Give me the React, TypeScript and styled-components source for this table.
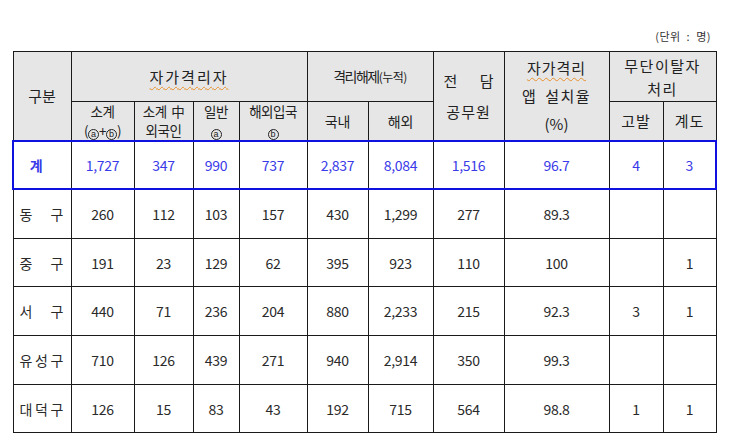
import React from "react";
import styled, { createGlobalStyle } from "styled-components";

const Global = createGlobalStyle`
  html, body { margin: 0; padding: 0; background: #fff; }
  body { font-family: "Noto Sans CJK KR", "Noto Sans", sans-serif; color: #222; }
`;

const Page = styled.div`
  width: 737px;
  height: 447px;
  padding: 28px 0 0 12px;
  box-sizing: border-box;
`;

const UnitLine = styled.div`
  width: 699px;
  height: 17px;
  line-height: 17px;
  margin-bottom: 6px;
  display: flex;
  justify-content: flex-end;
  align-items: center;
  font-size: 11px;
  color: #333;
  letter-spacing: 0.5px;
  word-spacing: 3px;
`;

const Table = styled.table`
  border-collapse: collapse;
  table-layout: fixed;
  width: 703px;
  td, th {
    border: 1px solid #1a1a1a;
    padding: 0;
    text-align: center;
    vertical-align: middle;
  }
`;

const HeadRow = styled.tr<{ $h: number }>`
  height: ${(p) => p.$h}px;
`;

const Th = styled.th<{ $size?: number; $lh?: number }>`
  background: #e6e6e6;
  font-weight: 400;
  font-size: ${(p) => p.$size ?? 15}px;
  line-height: ${(p) => p.$lh ?? 18}px;
  color: #222;
  white-space: nowrap;
  overflow: hidden;
`;

const Wavy = styled.span`
  text-decoration: underline wavy #e8902c;
  text-decoration-thickness: 1px;
  text-underline-offset: 3px;
`;

const Spread = styled.span<{ $w: number }>`
  display: inline-flex;
  justify-content: space-between;
  width: ${(p) => p.$w}px;
`;

const Small = styled.span`
  font-size: 12px;
  letter-spacing: -0.5px;
`;

const Tight = styled.span`
  letter-spacing: -1.5px;
`;

const SubHead = styled(Th)`
  font-size: 13.5px;
  line-height: 18.5px;
  letter-spacing: -0.5px;
  word-spacing: 2px;
`;

const Circled = styled.span`
  display: inline-flex;
  align-items: center;
  justify-content: center;
  width: 11px;
  height: 11px;
  border: 1px solid #222;
  border-radius: 50%;
  font-size: 9px;
  line-height: 1;
  letter-spacing: 0;
  vertical-align: -1px;
  box-sizing: border-box;
  font-family: "Liberation Sans", sans-serif;
`;

const DataRow = styled.tr<{ $h: number; $total?: boolean }>`
  height: ${(p) => p.$h}px;
  td {
    font-size: 14px;
    color: ${(p) => (p.$total ? "#3a3ae8" : "#2a2a2a")};
    letter-spacing: -0.3px;
    ${(p) =>
      p.$total
        ? `border-top: 2px solid #1010e0; border-bottom: 2px solid #1010e0;`
        : ""}
  }
  td:first-child {
    ${(p) => (p.$total ? `border-left: 2px solid #1010e0;` : "")}
  }
  td:last-child {
    ${(p) => (p.$total ? `border-right: 2px solid #1010e0;` : "")}
  }
`;

const NameCell = styled.td<{ $total?: boolean }>`
  font-size: 14px !important;
  letter-spacing: 0 !important;
  ${(p) => (p.$total ? `font-weight: 700; padding-right: 12px !important;` : "")}
`;

const NameSpread = styled.span`
  display: flex;
  justify-content: space-between;
  padding: 0 7px 0 6px;
`;

const cols = [58, 63, 59, 46, 68, 61, 65, 71, 105, 54, 53];

type Row = { name: string; spread?: boolean; total?: boolean; h: number; v: string[] };

const rows: Row[] = [
  { name: "계", total: true, h: 48, v: ["1,727", "347", "990", "737", "2,837", "8,084", "1,516", "96.7", "4", "3"] },
  { name: "동 구", spread: true, h: 50, v: ["260", "112", "103", "157", "430", "1,299", "277", "89.3", "", ""] },
  { name: "중 구", spread: true, h: 48, v: ["191", "23", "129", "62", "395", "923", "110", "100", "", "1"] },
  { name: "서 구", spread: true, h: 49, v: ["440", "71", "236", "204", "880", "2,233", "215", "92.3", "3", "1"] },
  { name: "유성구", spread: true, h: 49, v: ["710", "126", "439", "271", "940", "2,914", "350", "99.3", "", ""] },
  { name: "대덕구", spread: true, h: 48, v: ["126", "15", "83", "43", "192", "715", "564", "98.8", "1", "1"] },
];

export default function App() {
  return (
    <Page>
      <Global />
      <UnitLine>(단위 : 명)</UnitLine>
      <Table>
        <colgroup>
          {cols.map((w, i) => (
            <col key={i} style={{ width: w }} />
          ))}
        </colgroup>
        <thead>
          <HeadRow $h={50}>
            <Th rowSpan={2} $size={15}>구분</Th>
            <Th colSpan={4} $size={15}>
              <Wavy style={{ letterSpacing: "2px" }}>자가격리자</Wavy>
            </Th>
            <Th colSpan={2} $size={14}>
              <Tight>격리해제</Tight>
              <Small>(누적)</Small>
            </Th>
            <Th rowSpan={2} $size={15} $lh={31}>
              <Spread $w={50}>
                <span>전</span>
                <span>담</span>
              </Spread>
              <br />
              <span style={{ letterSpacing: "1px" }}>공무원</span>
            </Th>
            <Th rowSpan={2} $size={15} $lh={28}>
              <Wavy style={{ letterSpacing: "1px" }}>자가격리</Wavy>
              <br />
              <span style={{ letterSpacing: "1.5px", wordSpacing: "3px" }}>앱 설치율</span>
              <br />
              (%)
            </Th>
            <Th colSpan={2} $size={15} $lh={23} style={{ letterSpacing: "1.5px" }}>
              무단이탈자
              <br />
              처리
            </Th>
          </HeadRow>
          <HeadRow $h={39}>
            <SubHead>
              소계
              <br />
              (<Circled>a</Circled>+<Circled>b</Circled>)
            </SubHead>
            <SubHead>
              소계 中
              <br />
              외국인
            </SubHead>
            <SubHead>
              일반
              <br />
              <Circled>a</Circled>
            </SubHead>
            <SubHead>
              해외입국
              <br />
              <Circled>b</Circled>
            </SubHead>
            <Th $size={14}>국내</Th>
            <Th $size={14}>해외</Th>
            <Th $size={15} style={{ letterSpacing: "1px" }}>고발</Th>
            <Th $size={15} style={{ letterSpacing: "1px" }}>계도</Th>
          </HeadRow>
        </thead>
        <tbody>
          {rows.map((r) => (
            <DataRow key={r.name} $h={r.h} $total={r.total}>
              <NameCell $total={r.total}>
                {r.spread ? (
                  <NameSpread>
                    {r.name.length === 3
                      ? r.name.split("").map((c, i) => <span key={i}>{c}</span>)
                      : r.name.split(" ").map((c, i) => <span key={i}>{c}</span>)}
                  </NameSpread>
                ) : (
                  r.name
                )}
              </NameCell>
              {r.v.map((v, i) => (
                <td key={i}>{v}</td>
              ))}
            </DataRow>
          ))}
        </tbody>
      </Table>
    </Page>
  );
}
